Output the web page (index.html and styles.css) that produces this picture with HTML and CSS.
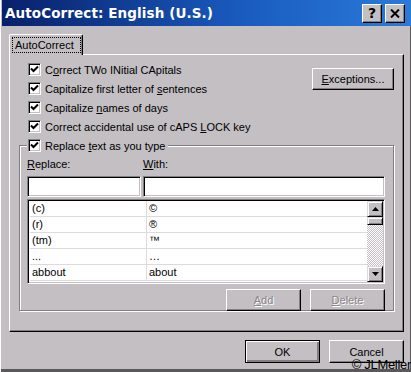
FILE: index.html
```html
<!DOCTYPE html>
<html lang="en">
<head>
    <meta charset="UTF-8">
    <title>AutoCorrect: English (U.S.)</title>
    <link rel="stylesheet" href="styles.css">
</head>
<body>
    <div class="dialog">
        <div class="titlebar">
            <span class="title">AutoCorrect: English (U.S.)</span>
            <div class="caption-buttons">
                <span class="cap-btn">?</span>
                <span class="cap-btn close">
                    <svg width="10" height="9" viewBox="0 0 10 9"><path d="M1 0.5 L9 8.5 M9 0.5 L1 8.5" stroke="#000" stroke-width="2"/></svg>
                </span>
            </div>
        </div>

        <div class="content">
            <div class="tabs">
                <div class="tab"><span class="tab-label">AutoCorrect</span></div>
            </div>

            <div class="panel">
                <div class="top-row">
                    <div class="options">
                        <div class="check"><span class="box"><svg width="9" height="9" viewBox="0 0 9 9"><path d="M1 3.5 L3.5 6 L8 1.5" stroke="#000" stroke-width="2" fill="none"/></svg></span><span>C<u>o</u>rrect TWo INitial CApitals</span></div>
                        <div class="check"><span class="box"><svg width="9" height="9" viewBox="0 0 9 9"><path d="M1 3.5 L3.5 6 L8 1.5" stroke="#000" stroke-width="2" fill="none"/></svg></span><span>Capitalize first letter of <u>s</u>entences</span></div>
                        <div class="check"><span class="box"><svg width="9" height="9" viewBox="0 0 9 9"><path d="M1 3.5 L3.5 6 L8 1.5" stroke="#000" stroke-width="2" fill="none"/></svg></span><span>Capitalize <u>n</u>ames of days</span></div>
                        <div class="check"><span class="box"><svg width="9" height="9" viewBox="0 0 9 9"><path d="M1 3.5 L3.5 6 L8 1.5" stroke="#000" stroke-width="2" fill="none"/></svg></span><span>Correct accidental use of cAPS <u>L</u>OCK key</span></div>
                    </div>
                    <span class="btn exceptions"><span><u>E</u>xceptions...</span></span>
                </div>

                <fieldset class="group">
                    <legend class="check"><span class="box"><svg width="9" height="9" viewBox="0 0 9 9"><path d="M1 3.5 L3.5 6 L8 1.5" stroke="#000" stroke-width="2" fill="none"/></svg></span><span>Replace <u>t</u>ext as you type</span></legend>

                    <div class="field-labels">
                        <span class="col-replace"><u>R</u>eplace:</span>
                        <span><u>W</u>ith:</span>
                    </div>
                    <div class="inputs">
                        <span class="input col-replace"></span>
                        <span class="input col-with"></span>
                    </div>

                    <div class="list">
                        <div class="rows">
                            <div class="row"><span class="cell col-replace">(c)</span><span class="cell">©</span></div>
                            <div class="row"><span class="cell col-replace">(r)</span><span class="cell">®</span></div>
                            <div class="row"><span class="cell col-replace">(tm)</span><span class="cell">™</span></div>
                            <div class="row"><span class="cell col-replace">...</span><span class="cell">…</span></div>
                            <div class="row"><span class="cell col-replace">abbout</span><span class="cell">about</span></div>
                        </div>
                        <div class="scrollbar">
                            <span class="sb-btn"><svg width="7" height="4" viewBox="0 0 7 4"><path d="M3.5 0 L7 4 L0 4 Z" fill="#000"/></svg></span>
                            <span class="sb-thumb"></span>
                            <span class="sb-track"></span>
                            <span class="sb-btn"><svg width="7" height="4" viewBox="0 0 7 4"><path d="M0 0 L7 0 L3.5 4 Z" fill="#000"/></svg></span>
                        </div>
                    </div>

                    <div class="group-buttons">
                        <span class="btn disabled"><span><u>A</u>dd</span></span>
                        <span class="btn disabled"><span><u>D</u>elete</span></span>
                    </div>
                </fieldset>
            </div>

            <div class="footer">
                <span class="btn default">OK</span>
                <span class="btn">Cancel</span>
            </div>
        </div>

        <div class="credit">© JLMeller</div>
    </div>
</body>
</html>
```

FILE: styles.css
```css
body {
    margin: 0;
    font-family: "Liberation Sans", Arial, sans-serif;
    font-size: 11px;
    color: #000;
    background: #c3bfc3;
}

.dialog {
    position: relative;
    width: 411px;
    height: 372px;
    box-sizing: border-box;
    padding-left: 2px;
    background: #c3bfc3;
    box-shadow: inset 1px 0 #fff, inset -1px -3px #5a585a;
    overflow: hidden;
}

/* title bar */
.titlebar {
    height: 26px;
    display: flex;
    align-items: center;
    justify-content: space-between;
    padding: 0 6px 0 3px;
    background: linear-gradient(to right, #08206a, #1a5cc0 60%, #2a7ad8);
}

.title {
    color: #fff;
    font-family: "DejaVu Sans", Verdana, sans-serif;
    font-weight: bold;
    font-size: 13.5px;
    letter-spacing: 0.1px;
}

.caption-buttons {
    display: flex;
    gap: 3px;
}

.cap-btn {
    width: 20px;
    height: 19px;
    box-sizing: border-box;
    display: flex;
    align-items: center;
    justify-content: center;
    background: #c3bfc3;
    border: 1px solid;
    border-color: #fff #000 #000 #fff;
    box-shadow: inset -1px -1px #808080;
    font-family: "DejaVu Sans", sans-serif;
    font-weight: bold;
    font-size: 14px;
}

/* tabs */
.content {
    padding: 8px 0 0 7px;
}

.tabs {
    display: flex;
}

.tab {
    position: relative;
    z-index: 1;
    margin-bottom: -1px;
    height: 21px;
    width: 74px;
    box-sizing: border-box;
    padding: 3px 2px 0 3px;
    background: #c3bfc3;
    border: 1px solid;
    border-bottom: none;
    border-color: #fff #000 #000 #fff;
    border-radius: 2px 2px 0 0;
    box-shadow: inset -1px 0 #808080;
}

.tab-label {
    display: block;
    height: 14px;
    line-height: 14px;
    padding-left: 2px;
    outline: 1px dotted #000;
}

/* panel */
.panel {
    width: 395px;
    height: 278px;
    box-sizing: border-box;
    padding: 5px 9px 0 9px;
    border: 1px solid;
    border-color: #fff #000 #000 #fff;
    box-shadow: inset -1px -1px #808080;
}

.top-row {
    display: flex;
    justify-content: space-between;
    align-items: flex-start;
}

.options {
    padding-left: 9px;
}

.check {
    display: flex;
    align-items: center;
    height: 19px;
    gap: 4px;
    white-space: nowrap;
}

.box {
    width: 13px;
    height: 13px;
    box-sizing: border-box;
    display: flex;
    align-items: center;
    justify-content: center;
    background: #fff;
    border: 1px solid;
    border-color: #808080 #fff #fff #808080;
    box-shadow: inset 1px 1px #000, inset -1px -1px #c3bfc3;
}

/* buttons */
.btn {
    display: flex;
    align-items: center;
    justify-content: center;
    width: 75px;
    height: 22px;
    box-sizing: border-box;
    border: 1px solid;
    border-color: #fff #000 #000 #fff;
    box-shadow: inset -1px -1px #808080;
    background: #c3bfc3;
}

.btn.exceptions {
    width: 82px;
    margin-top: 8px;
}

.btn.default {
    border-color: #000;
    box-shadow: inset 1px 1px #fff, inset -2px -2px #808080;
}

.btn.disabled {
    color: #8a878a;
    text-shadow: 1px 1px #fff;
}

/* replace group */
.group {
    margin: 0;
    width: 375px;
    height: 175px;
    box-sizing: border-box;
    padding: 0 8px 7px 7px;
    border: 1px solid #808080;
    box-shadow: inset 1px 1px #fff, 1px 1px #fff;
}

.group legend {
    padding: 0 3px 0 1px;
    background: #c3bfc3;
}

.field-labels {
    display: flex;
    height: 13px;
    line-height: 13px;
    padding-top: 3px;
}

.col-replace {
    width: 116px;
    flex: none;
}

.inputs {
    display: flex;
    gap: 2px;
    margin-top: 5px;
}

.input {
    height: 21px;
    box-sizing: border-box;
    background: #fff;
    border: 1px solid;
    border-color: #808080 #fff #fff #808080;
    box-shadow: inset 1px 1px #000, inset -1px -1px #c3bfc3;
}

.inputs .col-replace {
    width: 114px;
}

.col-with {
    flex: 1;
}

/* list */
.list {
    display: flex;
    margin-top: 2px;
    height: 85px;
    box-sizing: border-box;
    background: #fff;
    border: 1px solid;
    border-color: #808080 #fff #fff #808080;
    box-shadow: inset 1px 1px #000, inset -1px -1px #c3bfc3;
    padding: 1px 1px 1px 1px;
}

.rows {
    flex: 1;
    padding-left: 1px;
}

.row {
    display: flex;
    height: 16px;
    box-sizing: border-box;
    border-bottom: 1px solid #dcdadc;
}

.cell {
    padding-left: 2px;
    line-height: 15px;
}

.row .col-replace {
    width: 114px;
    border-right: 1px solid #dcdadc;
}

.scrollbar {
    width: 16px;
    display: flex;
    flex-direction: column;
}

.sb-btn,
.sb-thumb {
    height: 16px;
    box-sizing: border-box;
    display: flex;
    align-items: center;
    justify-content: center;
    background: #c3bfc3;
    border: 1px solid;
    border-color: #dcdadc #000 #000 #dcdadc;
    box-shadow: inset 1px 1px #fff, inset -1px -1px #808080;
}

.sb-thumb {
    height: 8px;
}

.sb-track {
    flex: 1;
    background-color: #fff;
    background-image: repeating-conic-gradient(#c3bfc3 0 25%, #fff 0 50%);
    background-size: 2px 2px;
}

.group-buttons {
    display: flex;
    justify-content: flex-end;
    gap: 9px;
    margin-top: 5px;
}

/* footer */
.footer {
    display: flex;
    justify-content: flex-end;
    gap: 9px;
    width: 395px;
    margin-top: 8px;
}

.footer .btn {
    height: 23px;
}

.credit {
    position: absolute;
    right: 0;
    bottom: 0;
    font-size: 13px;
    line-height: 15px;
    letter-spacing: -0.3px;
    color: #000;
}
```
